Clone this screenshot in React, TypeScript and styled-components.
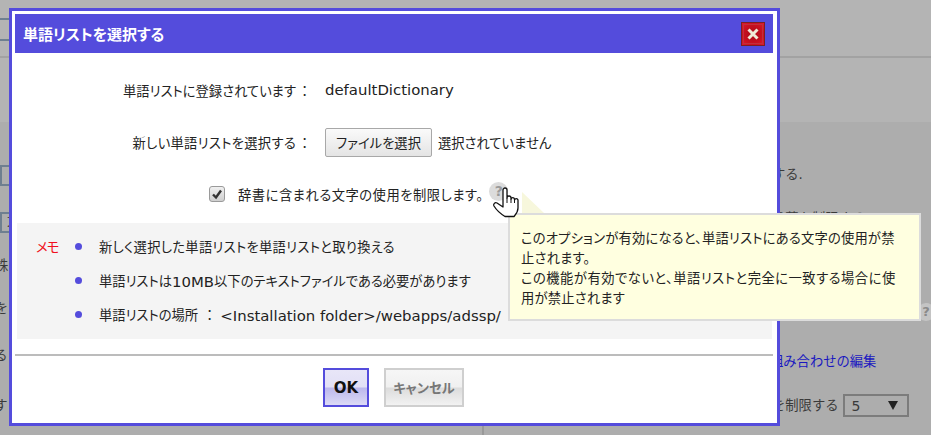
import React from 'react';
import styled, { createGlobalStyle } from 'styled-components';

const FONT = `"DejaVu Sans", "Noto Sans CJK JP", sans-serif`;

const GlobalStyle = createGlobalStyle`
  html, body { margin: 0; padding: 0; background: #adadad; }
  body {
    width: 931px;
    height: 435px;
    overflow: hidden;
    font-family: ${FONT};
    font-feature-settings: "palt";
  }
  button { font-feature-settings: "palt"; }
`;

const Page = styled.div`
  position: relative;
  width: 931px;
  height: 435px;
  overflow: hidden;
  display: flex;
  flex-direction: column;
  color: #3a3a3a;
  font-size: 13.3px;
`;

const PageHead = styled.div`
  height: 122px;
  flex: none;
  background: #b4b4b4;
  padding-top: 18px;
  box-sizing: border-box;
`;

const TabLine = styled.div<{ $top: number }>`
  width: 9px;
  height: 2px;
  margin-top: ${p => p.$top}px;
  background: #6e7f90;
`;

const HeadRule = styled.div`
  height: 2px;
  margin-top: 15px;
  background: #a2a2a2;
`;

const PageBody = styled.div`
  flex: 1;
  display: flex;
  min-height: 0;
`;

const LeftPane = styled.div`
  width: 484px;
  flex: none;
  box-sizing: border-box;
  border-right: 2px solid #999;
  display: flex;
  flex-direction: column;
`;

const BackField = styled.div<{ $top: number }>`
  width: 9px;
  height: 21px;
  box-sizing: border-box;
  margin-top: ${p => p.$top}px;
  padding-left: 5px;
  border: 2px solid #6e7f90;
  border-right: none;
  color: #333;
  font-size: 12px;
  line-height: 17px;
  overflow: hidden;
`;

const LeftText = styled.div<{ $top: number }>`
  margin-top: ${p => p.$top}px;
  margin-left: -5px;
  height: 18px;
  line-height: 18px;
  white-space: nowrap;
`;

const RightPane = styled.div`
  flex: 1;
  display: flex;
  flex-direction: column;
  align-items: flex-start;
  padding-left: 288px;
  font-feature-settings: normal;
`;

const BackLine = styled.div<{ $top: number }>`
  margin-top: ${p => p.$top}px;
  height: 18px;
  line-height: 18px;
  white-space: nowrap;
`;

const BackLink = styled(BackLine)`
  margin-left: -2px;
  color: #1a18c0;
`;

const Picker = styled.span`
  display: inline-flex;
  align-items: center;
  justify-content: space-between;
  box-sizing: border-box;
  width: 66px;
  height: 23px;
  margin-left: 5px;
  padding: 0 9px 0 6px;
  border: 2px solid #7c7c7c;
  vertical-align: middle;
  font-size: 14px;
`;

const PickerArrow = styled.span`
  width: 0;
  height: 0;
  border-left: 5px solid transparent;
  border-right: 5px solid transparent;
  border-top: 9px solid #222;
`;

const EdgeHelp = styled.span`
  position: absolute;
  left: 917px;
  top: 303px;
  width: 18px;
  height: 18px;
  border-radius: 50%;
  background: #c4c4c4;
  color: #8a8a8a;
  font-weight: 700;
  font-size: 13px;
  line-height: 18px;
  text-align: center;
`;

const Dialog = styled.div`
  position: absolute;
  left: 9px;
  top: 8px;
  width: 771px;
  height: 418px;
  box-sizing: border-box;
  border: 3px solid #544cdc;
  background: #fff;
  padding: 3px 4px 3px 3px;
  display: flex;
  flex-direction: column;
  color: #222;
  font-size: 13.3px;
`;

const TitleBar = styled.div`
  height: 39px;
  flex: none;
  background: #544cdc;
  color: #fff;
  display: flex;
  align-items: center;
  justify-content: space-between;
  padding: 0 8px;
  font-size: 15px;
  font-weight: 700;
`;

const CloseButton = styled.button`
  width: 24px;
  height: 24px;
  padding: 0;
  border: 1px solid #7a2020;
  background: radial-gradient(circle, #a80c18 0%, #c81020 60%, #e0182c 100%);
  outline: 1px solid #c0303a;
  outline-offset: -3px;
  display: flex;
  align-items: center;
  justify-content: center;
`;

const FormRow = styled.div<{ $top: number }>`
  display: flex;
  align-items: center;
  height: 30px;
  margin-top: ${p => p.$top}px;
`;

const FormLabel = styled.div<{ $tracking?: number }>`
  width: 296px;
  flex: none;
  text-align: right;
  letter-spacing: ${p => p.$tracking ?? 0}px;
`;

const Colon = styled.span`
  display: inline-block;
  width: 13px;
  margin-left: 2px;
  text-align: center;
  font-feature-settings: normal;
`;

const MemoColon = styled(Colon)`
  margin-left: 5px;
`;

const FormValue = styled.div`
  margin-left: 14px;
  display: flex;
  align-items: center;
  gap: 6px;
`;

const Latin = styled.span`
  font-size: 14.9px;
  letter-spacing: 0;
`;

const FileButton = styled.button`
  height: 29px;
  width: 107px;
  border: 1px solid #a8a8a8;
  border-radius: 2px;
  background: linear-gradient(#fafafa, #e4e4e4);
  color: #222;
  font: inherit;
  padding: 0;
`;

const CheckRow = styled(FormRow)`
  padding-left: 194px;
`;

const CheckText = styled.span`
  letter-spacing: 0.5px;
`;

const CheckBox = styled.span`
  width: 16px;
  height: 16px;
  box-sizing: border-box;
  border: 1px solid #9a9a9a;
  border-radius: 3px;
  background: linear-gradient(#f0f0f0, #cfcfcf);
  display: flex;
  align-items: center;
  justify-content: center;
  margin-right: 13px;
`;

const HelpDot = styled.span`
  width: 19px;
  height: 19px;
  margin: -6px 0 0 6px;
  border-radius: 50%;
  background: #dcdcdc;
  color: #9a9a9a;
  font-weight: 700;
  font-size: 14px;
  display: flex;
  align-items: center;
  justify-content: center;
`;

const MemoBox = styled.div`
  margin: 14px 1px 0 2px;
  height: 116px;
  flex: none;
  background: #f4f4f4;
  display: flex;
  padding: 8px 0 0 19px;
  box-sizing: border-box;
`;

const MemoTag = styled.div`
  width: 39px;
  flex: none;
  color: #f01020;
  line-height: 34px;
  letter-spacing: -1px;
`;

const MemoList = styled.ul`
  list-style: none;
  margin: 0;
  padding: 0;
`;

const MemoItem = styled.li<{ $tracking?: number }>`
  height: 34px;
  line-height: 34px;
  white-space: nowrap;
  display: flex;
  align-items: center;
  letter-spacing: ${p => p.$tracking ?? 0}px;
`;

const Bullet = styled.span`
  width: 7px;
  height: 7px;
  border-radius: 50%;
  background: #544cdc;
  margin: -3px 17px 0 0;
  flex: none;
`;

const Divider = styled.div`
  height: 2px;
  flex: none;
  margin-top: 15px;
  background: #bcbcbc;
`;

const ButtonRow = styled.div`
  display: flex;
  justify-content: center;
  gap: 15px;
  margin-top: 12px;
  padding-right: 1px;
`;

const OkButton = styled.button`
  width: 46px;
  height: 39px;
  box-sizing: border-box;
  border: 2px solid #544cdc;
  background: linear-gradient(#e8e6f8 0%, #e2e0f6 48%, #bcb8ec 52%, #dcdaf6 100%);
  color: #111;
  font-family: ${FONT};
  font-weight: 700;
  font-size: 15px;
  padding: 0;
`;

const CancelButton = styled.button`
  width: 80px;
  height: 39px;
  box-sizing: border-box;
  border: 2px solid #cfcfcf;
  background: linear-gradient(#f6f6f6 0%, #f0f0f0 48%, #dcdcdc 52%, #f2f2f2 100%);
  color: #777;
  font-family: ${FONT};
  font-size: 13.3px;
  font-weight: 700;
  padding: 0;
`;

const Tooltip = styled.div`
  position: absolute;
  left: 508px;
  top: 213px;
  width: 413px;
  height: 108px;
  box-sizing: border-box;
  border: 2px solid #dcdcdc;
  background: #ffffe0;
  padding: 14px 0 0 11px;
  color: #222;
  font-size: 13.3px;
  line-height: 20px;
`;

const TipLine = styled.div<{ $tracking: number }>`
  white-space: nowrap;
  letter-spacing: ${p => p.$tracking}px;
`;

const TooltipTail = styled.svg`
  position: absolute;
  left: 522px;
  top: 192px;
`;

const Cursor = styled.svg`
  position: absolute;
  left: 492px;
  top: 186px;
`;

const App: React.FC = () => (
  <>
    <GlobalStyle />
    <Page>
      <PageHead>
        <TabLine $top={0} />
        <TabLine $top={19} />
        <HeadRule />
      </PageHead>
      <PageBody>
        <LeftPane>
          <BackField $top={43} />
          <BackField $top={26}>文字</BackField>
          <LeftText $top={24}>株</LeftText>
          <LeftText $top={25}>を</LeftText>
          <LeftText $top={29}>る</LeftText>
          <LeftText $top={32}>す</LeftText>
        </LeftPane>
        <RightPane>
          <BackLine $top={44}>する.</BackLine>
          <BackLine $top={26}>言葉を制限する</BackLine>
          <BackLink $top={125}>組み合わせの編集</BackLink>
          <BackLine $top={23}>を制限する<Picker>5<PickerArrow /></Picker></BackLine>
        </RightPane>
      </PageBody>
      <EdgeHelp>?</EdgeHelp>
      <Dialog>
        <TitleBar>
          単語リストを選択する
          <CloseButton aria-label="閉じる">
            <svg width="16" height="16" viewBox="0 0 16 16">
              <path d="M3.500 3.500l9 9M12.500 3.500l-9 9" stroke="#f0ecd8" strokeWidth="3" />
            </svg>
          </CloseButton>
        </TitleBar>
        <FormRow $top={22}>
          <FormLabel>単語リストに登録されています<Colon>：</Colon></FormLabel>
          <FormValue><Latin>defaultDictionary</Latin></FormValue>
        </FormRow>
        <FormRow $top={22}>
          <FormLabel $tracking={0.3}>新しい単語リストを選択する<Colon>：</Colon></FormLabel>
          <FormValue><FileButton>ファイルを選択</FileButton>選択されていません</FormValue>
        </FormRow>
        <CheckRow $top={22}>
          <CheckBox>
            <svg width="12" height="12" viewBox="0 0 12 12">
              <path d="M2 6.500l3 3 5-7" fill="none" stroke="#333" strokeWidth="2.4" />
            </svg>
          </CheckBox>
          <CheckText>辞書に含まれる文字の使用を制限します。</CheckText>
          <HelpDot>?</HelpDot>
        </CheckRow>
        <MemoBox>
          <MemoTag>メモ</MemoTag>
          <MemoList>
            <MemoItem $tracking={0.3}><Bullet />新しく選択した単語リストを単語リストと取り換える</MemoItem>
            <MemoItem><Bullet />単語リストは<Latin>10MB</Latin>以下のテキストファイルである必要があります</MemoItem>
            <MemoItem><Bullet />単語リストの場所<MemoColon>：</MemoColon>&nbsp;<Latin>&lt;Installation folder&gt;/webapps/adssp/</Latin></MemoItem>
          </MemoList>
        </MemoBox>
        <Divider />
        <ButtonRow>
          <OkButton>OK</OkButton>
          <CancelButton>キャンセル</CancelButton>
        </ButtonRow>
      </Dialog>
      <TooltipTail width="24" height="22" viewBox="0 0 24 22">
        <path d="M0 0L22 21H0Z" fill="#f7f7dc" />
      </TooltipTail>
      <Tooltip>
        <TipLine $tracking={0.2}>このオプションが有効になると、単語リストにある文字の使用が禁</TipLine>
        <TipLine $tracking={0.2}>止されます。</TipLine>
        <TipLine $tracking={0.5}>この機能が有効でないと、単語リストと完全に一致する場合に使</TipLine>
        <TipLine $tracking={0.2}>用が禁止されます</TipLine>
      </Tooltip>
      <Cursor width="30" height="32" viewBox="0 0 30 32">
        <path
          d="M11 4a2 2 0 0 1 4 0V12a2 2 0 0 1 4 0v1a1.800 1.800 0 0 1 3.500 0v1a1.800 1.800 0 0 1 3.500 0V22c0 4-2 6-4 8.500H13C9 28 5 25 2 20c-1-2 1-4 3-3l6 4Z"
          fill="#fff"
          stroke="#111"
          strokeWidth="1.300"
          strokeLinejoin="round"
        />
        <path d="M15 12v5M19 13v4M22.500 14v3" fill="none" stroke="#111" strokeWidth="1" />
      </Cursor>
    </Page>
  </>
);

export default App;
